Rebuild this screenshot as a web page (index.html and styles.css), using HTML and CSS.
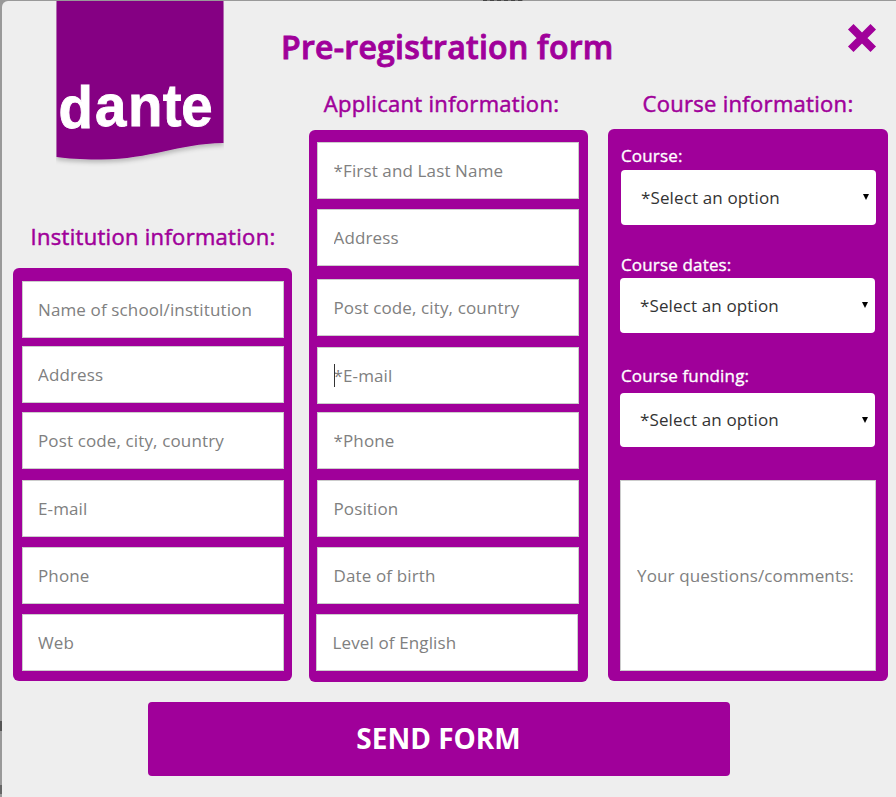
FILE: index.html
```
<!DOCTYPE html>
<html lang="en">
<head>
    <meta charset="UTF-8">
    <meta name="viewport" content="width=device-width, initial-scale=1.0">
    <title>Pre-registration form</title>
    <link rel="stylesheet" href="styles.css">
</head>
<body>
    <form class="modal" id="registrationForm">
        <div class="column institution">
            <svg class="logo" width="168" height="166" viewBox="0 0 168 166" role="img" aria-label="dante">
                <defs>
                    <filter id="shadow" x="0" y="0" width="1" height="1.1">
                        <feDropShadow dx="0" dy="3" stdDeviation="2" flood-color="#000" flood-opacity="0.22"/>
                    </filter>
                </defs>
                <path filter="url(#shadow)" fill="#850083" d="M.5 0H167.500V142C120 143 96 158 45 158.500C27 158.700 12 157.500 .5 156Z"/>
                <text class="logo-text" transform="scale(.94 1)" x="2.800 41.500 76.600 113.500 133.200" y="127 125 125 125 125">dante</text>
            </svg>
            <h2>Institution information:</h2>
            <div class="panel">
                <input type="text" name="school" placeholder="Name of school/institution">
                <input type="text" name="schoolAddress" placeholder="Address">
                <input type="text" name="schoolCity" placeholder="Post code, city, country">
                <input type="text" name="schoolEmail" placeholder="E-mail">
                <input type="text" name="schoolPhone" placeholder="Phone">
                <input type="text" name="web" placeholder="Web">
            </div>
        </div>

        <div class="header">
            <h1>Pre-registration form</h1>
            <button type="button" class="close" aria-label="Close">
                <svg width="30" height="30" viewBox="0 0 30 30">
                    <path d="M3.750 3.750L26.250 26.250M26.250 3.750L3.750 26.250" stroke="#a0009a" stroke-width="7.800" fill="none"/>
                </svg>
            </button>
        </div>

        <div class="column applicant">
            <h2>Applicant information:</h2>
            <div class="panel">
                <input type="text" name="name" placeholder="*First and Last Name">
                <input type="text" name="address" placeholder="Address">
                <input type="text" name="city" placeholder="Post code, city, country">
                <div class="active-field">
                    <input type="text" name="email" placeholder="*E-mail">
                </div>
                <input type="text" name="phone" placeholder="*Phone">
                <input type="text" name="position" placeholder="Position">
                <input type="text" name="birth" placeholder="Date of birth">
                <input type="text" name="level" placeholder="Level of English">
            </div>
        </div>

        <div class="column course">
            <h2>Course information:</h2>
            <div class="panel">
                <label for="course">Course:</label>
                <div class="select first">
                    <select id="course" name="course">
                        <option>*Select an option</option>
                    </select>
                </div>
                <label for="dates">Course dates:</label>
                <div class="select">
                    <select id="dates" name="dates">
                        <option>*Select an option</option>
                    </select>
                </div>
                <label for="funding">Course funding:</label>
                <div class="select">
                    <select id="funding" name="funding">
                        <option>*Select an option</option>
                    </select>
                </div>
                <input type="text" class="comments" name="comments" placeholder="Your questions/comments:">
            </div>
        </div>

        <button type="submit" class="send">SEND FORM</button>
    </form>
</body>
</html>
```

FILE: styles.css
```
* {
    box-sizing: border-box;
}
body {
    margin: 0;
    padding: 1px 0 0 2px;
    height: 797px;
    overflow: hidden;
    font-family: "Open Sans", sans-serif;
    background:
        linear-gradient(#555, #555) 0 721px / 2px 10px no-repeat,
        linear-gradient(#666, #666) 0 785px / 2px 9px no-repeat,
        repeating-linear-gradient(90deg, #444 0 4px, #777 4px 7px) 483px 0 / 40px 1px no-repeat,
        #999;
}
.modal {
    display: grid;
    grid-template-columns: 279px 279px 280px;
    grid-template-rows: 89px 592px 74px;
    column-gap: 17px;
    height: 796px;
    padding-left: 11px;
    border-radius: 6px 0 0 0;
    background-color: #eee;
}
h1, h2 {
    margin: 0;
    color: #a0009a;
}
h1 {
    font-size: 32px;
    line-height: 44px;
    font-weight: 600;
    letter-spacing: 0.27px;
    -webkit-text-stroke: 0.9px #a0009a;
}
h2 {
    font-size: 22px;
    line-height: 30px;
    font-weight: 400;
    letter-spacing: 0.3px;
    text-align: center;
    white-space: nowrap;
    -webkit-text-stroke: 0.5px #a0009a;
}
.column {
    display: flex;
    flex-direction: column;
}
.institution {
    grid-row: 1 / 3;
    grid-column: 1;
}
.logo {
    display: block;
    margin-left: 43px;
}
.logo-text {
    font-family: "Liberation Sans", sans-serif;
    font-size: 60px;
    font-weight: 700;
    fill: #fff;
    stroke: #fff;
    stroke-width: 0.9px;
}
.institution h2 {
    margin: 54px 0 0 1px;
}
.header {
    grid-column: 2 / 4;
    display: flex;
    justify-content: space-between;
    align-items: flex-start;
    padding-top: 24px;
    margin-left: -28px;
}
.close {
    margin: -2px 8px 0 0;
    padding: 0;
    border: none;
    background: none;
    line-height: 0;
    cursor: pointer;
}
.applicant h2 {
    margin: -2px 14px 0 0;
}
.course {
    margin-left: 3px;
    width: 280px;
}
.course h2 {
    margin-top: -2px;
}
.panel {
    display: flex;
    flex-direction: column;
    margin-top: 17px;
    padding: 13px 9px 0;
    height: 413px;
    border-radius: 6px;
    background-color: #a0009a;
}
.applicant .panel {
    margin-top: 12px;
    padding: 12px 8px 0;
    height: 552px;
}
.course .panel {
    margin-top: 11px;
    padding: 15px 12px 0;
    height: 552px;
}
input {
    display: block;
    width: 262px;
    height: 57px;
    flex: none;
    margin: 0 0 10px;
    padding: 0 15px;
    font-family: inherit;
    font-size: 17px;
    letter-spacing: 0.13px;
    color: #333;
    border: 1px solid #ccc;
    border-radius: 0;
    background-color: #fff;
    outline: none;
}
.applicant input {
    padding-left: 15.5px;
}
input::placeholder {
    color: #808080;
    opacity: 1;
}
.institution input:nth-child(1) {
    margin-bottom: 8px;
}
.institution input:nth-child(2) {
    margin-bottom: 9px;
}
.institution input:nth-child(3) {
    margin-bottom: 11px;
}
.applicant input:nth-child(2) {
    margin-bottom: 13px;
}
.applicant input:nth-child(3),
.applicant input:nth-child(5) {
    margin-bottom: 11px;
}
.active-field {
    position: relative;
    margin-bottom: 8px;
}
.active-field input {
    margin: 0;
}
/* text cursor */
.active-field::after {
    content: "";
    position: absolute;
    left: 17px;
    top: 17px;
    width: 1px;
    height: 23px;
    background-color: #333;
}
.applicant .panel > input:last-child {
    margin-left: -1px;
}
label {
    margin-left: 1px;
    font-size: 17px;
    line-height: 23px;
    letter-spacing: 0.16px;
    color: #fff;
    -webkit-text-stroke: 0.35px #fff;
}
.select {
    position: relative;
    width: 255px;
    height: 55px;
    margin-bottom: 32px;
}
.select.first {
    margin-left: 1px;
    margin-top: 3px;
    margin-bottom: 28px;
}
.select:nth-of-type(2) {
    margin-top: 2px;
    margin-bottom: 31px;
}
.select:nth-of-type(3) {
    margin-top: 6px;
    margin-bottom: 33px;
    height: 54px;
}
select {
    appearance: none;
    width: 100%;
    height: 100%;
    padding: 0 20px 1px;
    font-family: inherit;
    font-size: 17px;
    letter-spacing: 0.13px;
    color: #333;
    border: none;
    border-radius: 4px;
    background-color: #fff;
}
.select::after {
    content: "";
    position: absolute;
    right: 7px;
    top: 24px;
    width: 6px;
    height: 6px;
    background-color: #000;
    clip-path: polygon(0 0, 100% 0, 50% 100%);
}
input.comments {
    width: 256px;
    height: 191px;
    margin: 0;
    padding-left: 16px;
}
.send {
    grid-column: 1 / 4;
    margin: 20px 0 0 134.5px;
    width: 582px;
    height: 74px;
    padding: 0 0 2px;
    font-family: inherit;
    font-size: 28px;
    font-weight: 700;
    color: #fff;
    background-color: #a0009a;
    border: none;
    border-radius: 4px;
    cursor: pointer;
}
```
